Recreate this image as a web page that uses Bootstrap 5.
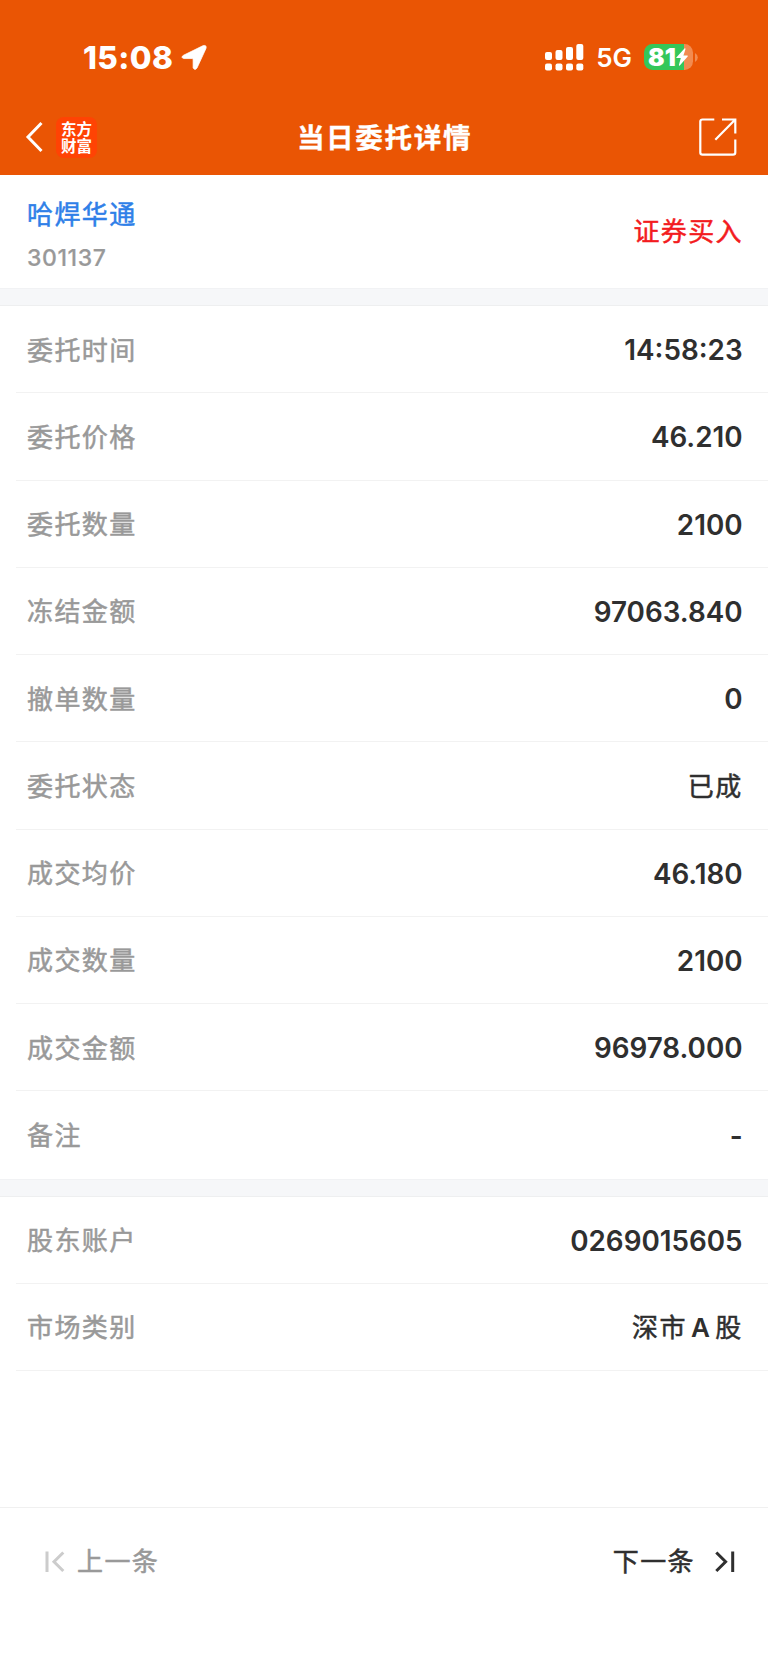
<!DOCTYPE html>
<html lang="zh-CN">
<head>
<meta charset="utf-8">
<meta name="viewport" content="width=device-width, initial-scale=1">
<title>当日委托详情</title>
<link href="https://cdn.jsdelivr.net/npm/bootstrap@5.3.0/dist/css/bootstrap.min.css" rel="stylesheet">
<style>
  body { font-family: Inter, "Noto Sans CJK SC", sans-serif; color: #2f2f2f; height: 1669px; overflow: hidden; line-height: 1; }
  svg { display: block; flex: none; }
  .zh { font-size: 26px; letter-spacing: 1.4px; line-height: 38px; -webkit-text-stroke: .5px currentColor; white-space: nowrap; }
  .app-head { background: #ea5504; height: 175px; }
  .status { height: 114px; padding: 0 70px 0 83px; }
  .clock { font-size: 31.5px; font-weight: 800; letter-spacing: .4px; padding-top: 1px; }
  .net { font-size: 26px; font-weight: 600; margin: 2px 12px 0 12px; }
  .batt { width: 49px; height: 26px; border-radius: 8.5px; padding-left: 4px; background: linear-gradient(90deg, #34c759 40.3px, #f28b50 40.3px); font-size: 24.5px; font-weight: 900; }
  .titlebar { height: 46px; padding: 0 31px 0 25px; }
  .page-title { font-size: 27.6px; font-weight: 700; letter-spacing: 1.6px; line-height: 40px; white-space: nowrap; padding: 1px 0 0 1px; -webkit-text-stroke: .3px currentColor; }
  .brand-tile { width: 41px; height: 41px; margin-left: 12px; border-radius: 8px; background: #ff4304; font: 700 15.5px/17px "Noto Sans CJK SC", sans-serif; }
  .stock { height: 113px; padding: 0 25px 0 27px; }
  .stock-name { color: #2f7fe8; line-height: 39px; margin-top: 3px; }
  .code { color: #999; font-size: 23px; font-weight: 500; letter-spacing: .6px; line-height: 28px; margin-top: 10px; -webkit-text-stroke: .2px currentColor; }
  .side { color: #f31b20; }
  .band { height: 18px; background: #f6f7f9; border-top: 1px solid #f1f2f4; border-bottom: 1px solid #eeeff0; }
  .item { height: 87.25px; margin-left: 16px; padding: 2px 25.4px 0 11px; border-bottom: 1px solid #f2f2f2; }
  .lbl { color: #999; }
  .item .zh { padding-top: 1px; }
  .num { font-size: 27.8px; font-weight: 600; line-height: 38px; }
  .latin { margin: 0 4px; font-weight: 600; -webkit-text-stroke: 0; }
  .pager { height: 162px; border-top: 1px solid #f0f0f0; padding: 35px 33px 0 45px; }
</style>
</head>
<body class="bg-white d-flex flex-column">
<header class="app-head text-white flex-shrink-0">
  <div class="status d-flex align-items-center justify-content-between">
    <div class="d-flex align-items-center">
      <span class="clock">15:08</span>
      <svg class="ms-2" width="26" height="27" viewBox="0 0 27 27"><path d="M2.6 11.2 22.7 1.3Q27 0 25.9 4.2L16.6 24.4Q14.5 27.5 12.6 24.5V15.6Q12.6 14.6 11.6 14.6H2.8Q-.8 13.4 2.6 11.2Z" fill="#fff" stroke="#fff" stroke-width=".8"/></svg>
    </div>
    <div class="d-flex align-items-center">
      <svg width="39" height="27" viewBox="0 0 39 27" fill="#fff"><rect y="8" width="7" height="8" rx="2"/><rect x="10.5" y="6" width="7" height="10" rx="2"/><rect x="21" y="3" width="7" height="13" rx="2"/><rect x="31.3" width="7" height="16" rx="2"/><rect y="19.5" width="7" height="7" rx="2"/><rect x="10.5" y="19.5" width="7" height="7" rx="2"/><rect x="21" y="19.5" width="7" height="7" rx="2"/><rect x="31.3" y="19.5" width="7" height="7" rx="2"/></svg>
      <span class="net">5G</span>
      <span class="batt d-flex align-items-center"><span>81</span>
        <svg width="12" height="18" viewBox="0 0 12 18"><path d="M8.7.2.3 9.4Q0 10 .7 10H4.8L2.9 17Q3 18 3.8 17.4L11.7 8.5Q12 7.6 11.3 7.5H7.5L9.5 1Q9.6 0 8.7.2Z" fill="#fff"/></svg>
      </span>
      <svg width="5" height="9" viewBox="0 0 5 9"><path d="M2 0Q4.8 1.5 4.8 4.5T2 9Z" fill="#f28b50"/></svg>
    </div>
  </div>
  <div class="titlebar d-flex align-items-center justify-content-between position-relative">
    <div class="d-flex align-items-center">
      <svg width="19" height="32" viewBox="0 0 19 32"><path d="M16.5 2 3 16 16.5 30" fill="none" stroke="#fff" stroke-width="3"/></svg>
      <span class="brand-tile d-flex flex-column align-items-center justify-content-center"><span>东方</span><span>财富</span></span>
    </div>
    <h1 class="page-title m-0 position-absolute start-50 translate-middle-x">当日委托详情</h1>
    <svg width="38" height="38" viewBox="0 0 38 38" fill="none" stroke="#fff" stroke-width="2.2"><path d="M15.3 1.5H3.5Q1.3 1.5 1.3 3.5V34.5Q1.3 36.7 3.5 36.7H34Q36.3 36.7 36.3 34.5V21.5M23 1.5H36.3V15.5M36 1.8 16.3 21.8"/></svg>
  </div>
</header>
<main class="flex-grow-1">
  <section class="stock d-flex justify-content-between align-items-center">
    <div>
      <div class="zh stock-name">哈焊华通</div>
      <div class="code">301137</div>
    </div>
    <span class="zh side">证券买入</span>
  </section>
  <div class="band"></div>
  <section>
    <div class="item d-flex align-items-center justify-content-between"><span class="zh lbl">委托时间</span><span class="num">14:58:23</span></div>
    <div class="item d-flex align-items-center justify-content-between"><span class="zh lbl">委托价格</span><span class="num">46.210</span></div>
    <div class="item d-flex align-items-center justify-content-between"><span class="zh lbl">委托数量</span><span class="num">2100</span></div>
    <div class="item d-flex align-items-center justify-content-between"><span class="zh lbl">冻结金额</span><span class="num">97063.840</span></div>
    <div class="item d-flex align-items-center justify-content-between"><span class="zh lbl">撤单数量</span><span class="num">0</span></div>
    <div class="item d-flex align-items-center justify-content-between"><span class="zh lbl">委托状态</span><span class="zh">已成</span></div>
    <div class="item d-flex align-items-center justify-content-between"><span class="zh lbl">成交均价</span><span class="num">46.180</span></div>
    <div class="item d-flex align-items-center justify-content-between"><span class="zh lbl">成交数量</span><span class="num">2100</span></div>
    <div class="item d-flex align-items-center justify-content-between"><span class="zh lbl">成交金额</span><span class="num">96978.000</span></div>
    <div class="item d-flex align-items-center justify-content-between border-bottom-0"><span class="zh lbl">备注</span><span class="num">-</span></div>
  </section>
  <div class="band"></div>
  <section>
    <div class="item d-flex align-items-center justify-content-between"><span class="zh lbl">股东账户</span><span class="num">0269015605</span></div>
    <div class="item d-flex align-items-center justify-content-between"><span class="zh lbl">市场类别</span><span class="zh">深市<span class="latin">A</span>股</span></div>
  </section>
</main>
<footer class="pager d-flex justify-content-between align-items-start flex-shrink-0">
  <div class="d-flex align-items-center lbl">
    <svg width="20" height="22" viewBox="0 0 20 22" fill="none" stroke="#ccc" stroke-width="3"><path d="M2 .5V21M18.3 1.5 9 10.8 18.3 20"/></svg>
    <span class="zh ms-2 ps-1">上一条</span>
  </div>
  <div class="d-flex align-items-center">
    <span class="zh me-3">下一条</span>
    <svg class="ms-1" width="20" height="22" viewBox="0 0 20 22" fill="none" stroke="#2f2f2f" stroke-width="3"><path d="M17.7.5V21M1.3 1.5 10.6 10.8 1.3 20"/></svg>
  </div>
</footer>
<script src="https://cdn.jsdelivr.net/npm/bootstrap@5.3.0/dist/js/bootstrap.bundle.min.js"></script>
</body>
</html>
